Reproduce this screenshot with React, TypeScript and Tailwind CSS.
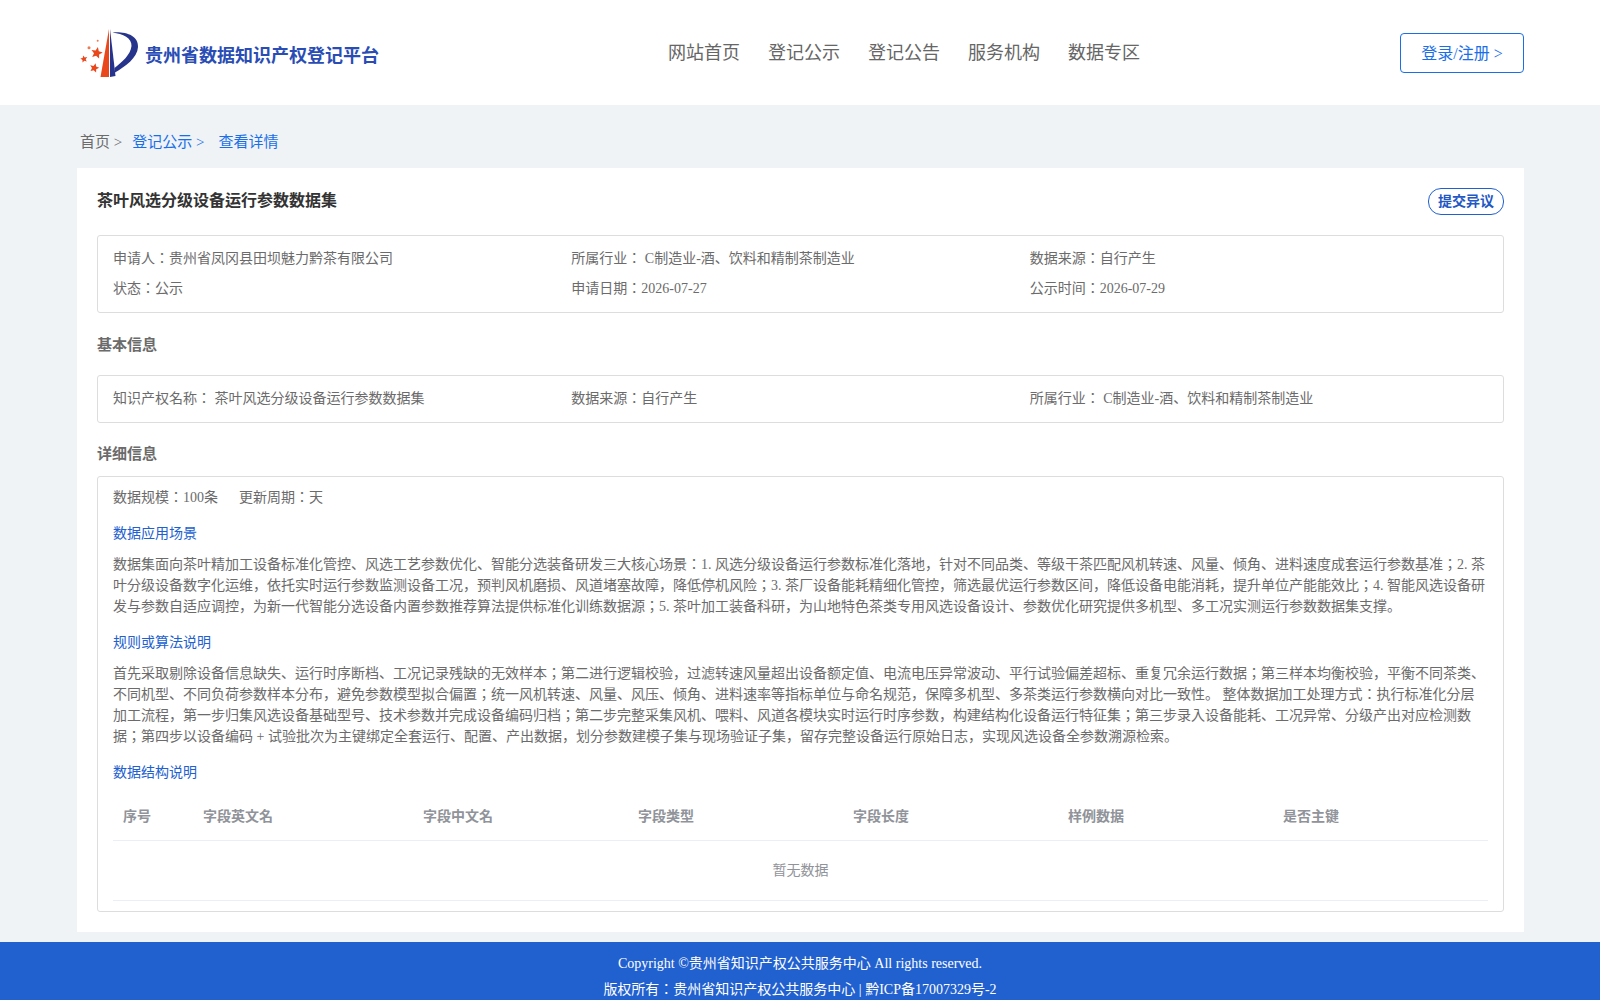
import React from "react";

const navItems = ["网站首页", "登记公示", "登记公告", "服务机构", "数据专区"];
const columns = [
  { label: "字段英文名", width: "w-[220px]" },
  { label: "字段中文名", width: "w-[215px]" },
  { label: "字段类型", width: "w-[215px]" },
  { label: "字段长度", width: "w-[215px]" },
  { label: "样例数据", width: "w-[215px]" },
  { label: "是否主键", width: "flex-1" },
];

// five pointed star, tilted a little like the ones in the logo
function star(cx: number, cy: number, r: number, tilt: number) {
  const pts: string[] = [];
  for (let i = 0; i < 10; i++) {
    const rad = i % 2 === 0 ? r : r * 0.46;
    const a = ((-90 + tilt + i * 36) * Math.PI) / 180;
    pts.push(`${(cx + rad * Math.cos(a)).toFixed(1)},${(cy + rad * Math.sin(a)).toFixed(1)}`);
  }
  return pts.join(" ");
}

function Logo() {
  return (
    <svg width="58" height="48" viewBox="0 0 58 48" className="shrink-0 overflow-visible">
      <path d="M28 0 L28 48 L19.5 48 Z" fill="#e8481c" />
      <path d="M29 0 L34.5 47 L29 48 Z" fill="#27348b" />
      <path d="M31.5 3.5 C45 2.5 57.5 6.5 57 18 C56.5 29 44 37.5 34 43.5 L33.5 39 C41 33 49.5 26 50.5 17 C51 9 42 5 31.5 3.5 Z" fill="#27348b" />
      <polygon points={star(15.7, 24, 6, 12)} fill="#e8481c" />
      <polygon points={star(3, 30, 3.7, -12)} fill="#e8481c" />
      <polygon points={star(13.3, 39, 4.9, 15)} fill="#e8481c" />
      <circle cx="8" cy="18.7" r="1.5" fill="#ee7a55" />
      <circle cx="16.7" cy="11.7" r="1" fill="#ee7a55" />
    </svg>
  );
}

export default function App() {
  return (
    <div className="h-[1000px] overflow-hidden bg-[#eff3f6] text-[14px] text-[#6b6b6b] font-['Liberation_Serif','Noto_Sans_CJK_JP',serif]">
      {/* Header */}
      <header className="h-[105px] bg-white">
        <div className="w-[1447px] ml-[77px] flex items-start justify-between">
          <div className="flex items-start w-[400px] pl-[4px] mt-[29px]">
            <Logo />
            <span className="ml-[6px] mt-[13px] text-[18px] leading-[28px] font-bold text-[#2a4db5]">贵州省数据知识产权登记平台</span>
          </div>
          <nav className="flex gap-[28px] mt-[40px] mr-[69px] text-[18px] leading-[26px] text-[#666]">
            {navItems.map((item) => (
              <a key={item}>{item}</a>
            ))}
          </nav>
          <button className="mt-[33px] w-[124px] h-[40px] pt-[1px] rounded-[4px] border border-[#1a6fe8] text-[16px] text-[#1a6fe8]">
            登录/注册 &gt;
          </button>
        </div>
      </header>

      <main className="w-[1447px] ml-[77px]">
        {/* Breadcrumb */}
        <div className="h-[63px] flex items-center pl-[3px] pt-[10px] text-[15px] leading-[20px]">
          <span>首页 &gt;</span>
          <span className="ml-[10px] text-[#1a6fe8]">登记公示 &gt;</span>
          <span className="ml-[14px] text-[#1a6fe8]">查看详情</span>
        </div>

        <div className="h-[764px] bg-white px-[20px] pt-[20px]">
          <div className="flex items-start justify-between h-[47px]">
            <h1 className="mt-[1px] text-[16px] leading-[24px] font-bold text-[#333]">茶叶风选分级设备运行参数数据集</h1>
            <button className="w-[76px] h-[27px] rounded-[13px] border border-[#2160cf] text-[14px] font-bold text-[#2257c4]">
              提交异议
            </button>
          </div>

          <div className="h-[78px] rounded-[3px] border border-[#ddd] px-[15px] pt-[7px] grid grid-cols-3 auto-rows-[30px] items-center">
            <div>申请人：贵州省凤冈县田坝魅力黔茶有限公司</div>
            <div>所属行业： C制造业-酒、饮料和精制茶制造业</div>
            <div>数据来源：自行产生</div>
            <div>状态：公示</div>
            <div>申请日期：2026-07-27</div>
            <div>公示时间：2026-07-29</div>
          </div>

          <h2 className="mt-[22px] text-[15px] leading-[20px] font-bold">基本信息</h2>

          <div className="mt-[20px] h-[48px] rounded-[3px] border border-[#ddd] px-[15px] pb-[1px] grid grid-cols-3 items-center">
            <div>知识产权名称： 茶叶风选分级设备运行参数数据集</div>
            <div>数据来源：自行产生</div>
            <div>所属行业： C制造业-酒、饮料和精制茶制造业</div>
          </div>

          <h2 className="mt-[21px] text-[15px] leading-[20px] font-bold">详细信息</h2>

          <div className="mt-[12px] h-[436px] rounded-[3px] border border-[#ddd] px-[15px] pt-[11px]">
            <div className="leading-[20px]">
              <span>数据规模：100条</span>
              <span className="ml-[21px]">更新周期：天</span>
            </div>

            <div className="mt-[16px] leading-[20px] text-[#2160cf]">数据应用场景</div>
            <p className="mt-[10px] leading-[21px]">
              数据集面向茶叶精加工设备标准化管控、风选工艺参数优化、智能分选装备研发三大核心场景：1. 风选分级设备运行参数标准化落地，针对不同品类、等级干茶匹配风机转速、风量、倾角、进料速度成套运行参数基准；2. 茶叶分级设备数字化运维，依托实时运行参数监测设备工况，预判风机磨损、风道堵塞故障，降低停机风险；3. 茶厂设备能耗精细化管控，筛选最优运行参数区间，降低设备电能消耗，提升单位产能能效比；4. 智能风选设备研发与参数自适应调控，为新一代智能分选设备内置参数推荐算法提供标准化训练数据源；5. 茶叶加工装备科研，为山地特色茶类专用风选设备设计、参数优化研究提供多机型、多工况实测运行参数数据集支撑。
            </p>

            <div className="mt-[16px] leading-[20px] text-[#2160cf]">规则或算法说明</div>
            <p className="mt-[10px] leading-[21px]">
              首先采取剔除设备信息缺失、运行时序断档、工况记录残缺的无效样本；第二进行逻辑校验，过滤转速风量超出设备额定值、电流电压异常波动、平行试验偏差超标、重复冗余运行数据；第三样本均衡校验，平衡不同茶类、不同机型、不同负荷参数样本分布，避免参数模型拟合偏置；统一风机转速、风量、风压、倾角、进料速率等指标单位与命名规范，保障多机型、多茶类运行参数横向对比一致性。 整体数据加工处理方式：执行标准化分层加工流程，第一步归集风选设备基础型号、技术参数并完成设备编码归档；第二步完整采集风机、喂料、风道各模块实时运行时序参数，构建结构化设备运行特征集；第三步录入设备能耗、工况异常、分级产出对应检测数据；第四步以设备编码 + 试验批次为主键绑定全套运行、配置、产出数据，划分参数建模子集与现场验证子集，留存完整设备运行原始日志，实现风选设备全参数溯源检索。
            </p>

            <div className="mt-[16px] leading-[20px] text-[#2160cf]">数据结构说明</div>

            <div className="mt-[10px] h-[48px] flex items-center border-b border-[#ebeef5] text-[#909399] font-bold">
              <div className="w-[90px] pl-[10px]">序号</div>
              {columns.map((col) => (
                <div key={col.label} className={col.width}>{col.label}</div>
              ))}
            </div>
            <div className="h-[60px] flex items-center justify-center border-b border-[#ebeef5] text-[#909399]">
              暂无数据
            </div>
          </div>
        </div>
      </main>

      <footer className="mt-[10px] h-[70px] bg-[#2160cf] pt-[9px] text-center text-[14px] leading-[26px] text-white">
        <div>Copyright ©贵州省知识产权公共服务中心 All rights reserved.</div>
        <div>版权所有：贵州省知识产权公共服务中心 | 黔ICP备17007329号-2</div>
      </footer>
    </div>
  );
}
